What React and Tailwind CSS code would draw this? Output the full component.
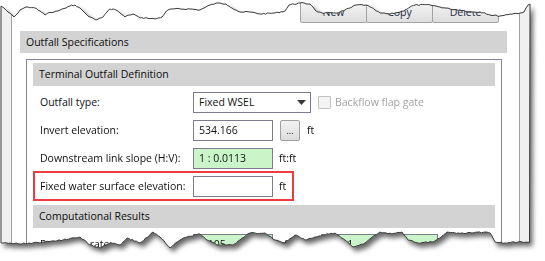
import React from "react";

// rough outline of the torn top edge, left to right
const TOP = [
  [1, 6], [4, 8], [8, 12], [14, 17], [18, 13], [20, 10], [24, 8], [28, 7], [35, 8], [40, 11],
  [45, 15], [48, 13], [54, 12], [58, 11], [62, 9], [66, 8], [70, 6], [75, 5], [78, 7], [82, 10],
  [86, 14], [90, 17], [96, 20], [100, 18], [103, 17], [107, 12], [110, 9], [113, 9], [116, 10],
  [120, 13], [125, 17], [129, 15], [133, 14], [137, 16], [140, 18], [147, 18], [155, 19], [162, 17],
  [165, 13], [168, 10], [172, 9], [190, 9], [200, 10], [204, 8], [210, 5], [218, 3], [226, 4],
  [229, 6], [232, 8], [236, 10], [240, 12], [250, 12], [260, 14], [275, 13], [285, 11], [289, 5],
  [300, 3], [310, 4], [313, 7], [315, 10], [318, 12], [322, 13], [335, 13], [340, 12], [345, 10],
  [350, 8], [356, 5], [366, 5], [370, 7], [375, 10], [380, 13], [390, 14], [400, 12], [405, 10],
  [410, 7], [415, 5], [430, 5], [440, 7], [450, 9], [460, 10], [472, 12], [480, 12], [485, 13],
  [490, 15], [500, 16], [510, 14], [520, 13], [524, 12], [526, 8], [528, 5], [530, 4],
];

// torn bottom edge, right to left
const BOTTOM = [
  [530, 242], [518, 242], [505, 243], [495, 242], [493, 238], [490, 233], [485, 232], [472, 233],
  [458, 233], [447, 232], [440, 238], [432, 242], [418, 243], [408, 240], [402, 232], [392, 234],
  [380, 232], [375, 235], [365, 243], [353, 247], [345, 240], [335, 233], [323, 235], [315, 237],
  [305, 240], [295, 235], [285, 243], [275, 240], [265, 233], [250, 233], [240, 240], [233, 245],
  [217, 245], [207, 240], [200, 234], [187, 237], [180, 240], [170, 248], [160, 237], [153, 232],
  [140, 243], [127, 238], [120, 245], [110, 243], [100, 248], [90, 245], [80, 237], [63, 240],
  [43, 242], [33, 243], [20, 244], [10, 243], [1, 243],
];

function roughen(points, seed) {
  let s = seed;
  const rand = () => {
    s = (s * 9301 + 49297) % 233280;
    return s / 233280;
  };
  const out = [];
  for (let i = 0; i < points.length - 1; i++) {
    const [x1, y1] = points[i];
    const [x2, y2] = points[i + 1];
    const n = Math.max(1, Math.round(Math.abs(x2 - x1) / 2));
    for (let k = 0; k < n; k++) {
      const t = k / n;
      const jitter = k === 0 ? 0 : (rand() - 0.5) * 1.3;
      out.push([x1 + (x2 - x1) * t, y1 + (y2 - y1) * t + jitter]);
    }
  }
  out.push(points[points.length - 1]);
  return out;
}

const top = roughen(TOP, 7);
const bottom = roughen(BOTTOM, 13);
const PAPER =
  "M" +
  top.map(([x, y]) => `${x.toFixed(1)},${y.toFixed(1)}`).join(" L") +
  " L529.5,242 L" +
  bottom.map(([x, y]) => `${x.toFixed(1)},${y.toFixed(1)}`).join(" L") +
  " Z";

function Tab({ children, className = "" }) {
  return (
    <div
      className={`flex h-[21px] w-[67px] items-center justify-center rounded-b-[2px] border border-[#a3a3a3] bg-gradient-to-b from-[#f4f4f4] to-[#dedede] text-[#1e2a44] ${className}`}
    >
      {children}
    </div>
  );
}

function Bar({ children, className = "" }) {
  return (
    <div className={`flex items-center bg-[#d3d3d3] pl-[6px] text-[#0c0c0c] ${className}`}>
      {children}
    </div>
  );
}

function Row({ label, children, className = "" }) {
  return (
    <div className={`relative flex h-[21px] items-center ${className}`}>
      <div className="w-[160px] pl-[7px]">{label}</div>
      {children}
    </div>
  );
}

function Field({ value, green, className = "" }) {
  return (
    <div
      className={`flex h-[21px] w-[80px] items-center border border-[#7c7c8e] pl-[5px] ${
        green ? "bg-[#c9f5c9]" : "bg-white"
      } ${className}`}
    >
      {value}
    </div>
  );
}

export default function App() {
  return (
    <div className="relative h-[261px] w-[545px] overflow-hidden bg-white font-['Open_Sans',sans-serif] text-[10.5px] leading-none text-[#111]">
      <svg width="0" height="0" className="absolute">
        <defs>
          <clipPath id="paper" clipPathUnits="userSpaceOnUse">
            <path d={PAPER} />
          </clipPath>
        </defs>
      </svg>

      <div className="drop-shadow-[3px_4px_2.5px_rgba(0,0,0,0.6)]">
        <div className="flex h-[261px] w-[530px] bg-[#f0f0f0] pl-[11px] pr-[10px] [clip-path:url(#paper)]">
          <div className="flex-1 border-x border-[#a0a0a0] bg-white">
            {/* tab buttons, mostly torn away */}
            <div className="flex justify-end pr-[20px] pt-[2px]">
              <Tab>New</Tab>
              <Tab className="-ml-px">Copy</Tab>
              <Tab className="-ml-px">Delete</Tab>
            </div>

            <Bar className="ml-[8px] mr-[12px] mt-[8px] h-[22px]">Outfall Specifications</Bar>

            <div className="ml-[14px] mr-[17px] mt-[6px] h-[200px] border border-[#8585a0] px-[6px] pt-[3px]">
              <Bar className="h-[23px]">Terminal Outfall Definition</Bar>

              <div className="flex flex-col gap-[7px] pt-[6px]">
                <Row label="Outfall type:">
                  <div className="flex h-[21px] w-[118px] items-center justify-between border border-[#7c7c8e] pl-[5px] pr-[4px]">
                    <span>Fixed WSEL</span>
                    <svg width="9" height="5" viewBox="0 0 9 5">
                      <path d="M0 0 H9 L4.5 5 Z" fill="#3a3a3a" />
                    </svg>
                  </div>
                  <div className="ml-[7px] h-[13px] w-[13px] rounded-[1px] border border-[#c2c2c2] bg-[#f4f4f4]" />
                  <span className="ml-[4px] text-[#a3a3a3]">Backflow flap gate</span>
                </Row>

                <Row label="Invert elevation:">
                  <Field value="534.166" />
                  <div className="ml-[7px] flex h-[21px] w-[20px] items-end justify-center rounded-[2px] border border-[#a0a0a0] bg-gradient-to-b from-[#f4f4f4] to-[#dcdcdc] pb-[5px] text-[9px]">
                    ...
                  </div>
                  <span className="ml-[7px]">ft</span>
                </Row>

                <Row label="Downstream link slope (H:V):">
                  <Field value="1 : 0.0113" green />
                  <span className="ml-[6px]">ft:ft</span>
                </Row>

                <Row label="Fixed water surface elevation:">
                  <Field value="" />
                  <span className="ml-[6px]">ft</span>
                  {/* red highlight drawn over the row */}
                  <div className="absolute -top-[5px] left-0 h-[30px] w-[261px] border-2 border-[#ee3b3f]" />
                </Row>
              </div>

              <Bar className="mt-[8px] h-[23px]">Computational Results</Bar>

              <Row label="Peak flow rate:" className="mt-[6px]">
                <Field value="0.105" green />
                <span className="ml-[6px]">cfs</span>
                <Field value="0.201" green className="ml-[28px] w-[117px]" />
              </Row>
            </div>
          </div>
        </div>
      </div>

      <svg className="pointer-events-none absolute inset-0" width="545" height="261">
        <path d={PAPER} fill="none" stroke="#3a3a3a" strokeWidth="1" strokeLinejoin="round" />
      </svg>
    </div>
  );
}
